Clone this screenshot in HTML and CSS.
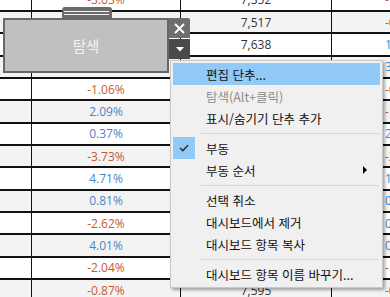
FILE: index.html
```html
<!DOCTYPE html>
<html lang="ko">
<head>
    <meta charset="UTF-8">
    <title>대시보드</title>
    <link rel="stylesheet" href="styles.css">
</head>
<body>
    <div class="sheet">
        <div class="row"><div class="cell"></div><div class="cell pct down">-3.03%</div><div class="cell num">7,352</div><div class="cell side down">-1.84%</div></div>
        <div class="row"><div class="cell"></div><div class="cell pct up">0.86%</div><div class="cell num">7,517</div><div class="cell side down">-0.52%</div></div>
        <div class="row"><div class="cell"></div><div class="cell pct up">1.42%</div><div class="cell num">7,638</div><div class="cell side up">1.07%</div></div>
        <div class="row"><div class="cell"></div><div class="cell pct down">-0.35%</div><div class="cell num">7,611</div><div class="cell side up">3.25%</div></div>
        <div class="row"><div class="cell"></div><div class="cell pct down">-1.06%</div><div class="cell num">7,530</div><div class="cell side down">-0.71%</div></div>
        <div class="row"><div class="cell"></div><div class="cell pct up">2.09%</div><div class="cell num">7,687</div><div class="cell side down">-1.39%</div></div>
        <div class="row"><div class="cell"></div><div class="cell pct up">0.37%</div><div class="cell num">7,716</div><div class="cell side up">2.18%</div></div>
        <div class="row"><div class="cell"></div><div class="cell pct down">-3.73%</div><div class="cell num">7,428</div><div class="cell side down">-2.40%</div></div>
        <div class="row"><div class="cell"></div><div class="cell pct up">4.71%</div><div class="cell num">7,778</div><div class="cell side up">1.93%</div></div>
        <div class="row"><div class="cell"></div><div class="cell pct up">0.81%</div><div class="cell num">7,841</div><div class="cell side up">0.64%</div></div>
        <div class="row"><div class="cell"></div><div class="cell pct down">-2.62%</div><div class="cell num">7,636</div><div class="cell side up">0.28%</div></div>
        <div class="row"><div class="cell"></div><div class="cell pct up">4.01%</div><div class="cell num">7,942</div><div class="cell side up">0.95%</div></div>
        <div class="row"><div class="cell"></div><div class="cell pct down">-2.04%</div><div class="cell num">7,780</div><div class="cell side down">-1.12%</div></div>
        <div class="row"><div class="cell"></div><div class="cell pct down">-0.87%</div><div class="cell num">7,595</div><div class="cell side down">-0.46%</div></div>
    </div>

    <!-- floating button widget -->
    <div class="widget">
        <div class="handle"><span></span><span></span></div>
        <div class="widget-body">탐색</div>
        <div class="widget-close">
            <svg width="11" height="11" viewBox="0 0 11 11"><path d="M1 1 L10 10 M10 1 L1 10" stroke="#fff" stroke-width="1.8" fill="none"/></svg>
        </div>
        <div class="widget-more">
            <svg width="8" height="5" viewBox="0 0 8 5"><path d="M0 0 H8 L4 4.5 Z" fill="#fff"/></svg>
        </div>
    </div>

    <!-- context menu -->
    <div class="menu">
        <div class="menu-item active">편집 단추...</div>
        <div class="menu-item disabled">탐색(Alt+클릭)</div>
        <div class="menu-item">표시/숨기기 단추 추가</div>
        <div class="menu-sep"></div>
        <div class="menu-item">
            <span class="check">
                <svg width="10" height="8" viewBox="0 0 10 8"><path d="M1 4 L3.8 6.6 L9 1.2" stroke="#333" stroke-width="1.5" fill="none"/></svg>
            </span>부동
        </div>
        <div class="menu-item">부동 순서<span class="arrow"></span></div>
        <div class="menu-sep"></div>
        <div class="menu-item">선택 취소</div>
        <div class="menu-item">대시보드에서 제거</div>
        <div class="menu-item">대시보드 항목 복사</div>
        <div class="menu-sep"></div>
        <div class="menu-item">대시보드 항목 이름 바꾸기...</div>
    </div>
</body>
</html>
```

FILE: styles.css
```css
* {
    margin: 0;
    padding: 0;
    box-sizing: border-box;
}

body {
    width: 390px;
    height: 297px;
    overflow: hidden;
    background-color: white;
    font-family: "Open Sans", "Noto Sans", sans-serif;
}

/* Table behind the widgets */
.sheet {
    margin-top: -10.33px;
}

.row {
    display: grid;
    grid-template-columns: 32px 149px 151px 1fr;
    height: 22.33px;
    border-bottom: 2px solid #111;
    background-color: white;
}

.row:nth-child(even) {
    background-color: #f3f3f3;
}

.cell {
    border-right: 1px solid #111;
    display: flex;
    align-items: center;
    font-size: 12px;
    white-space: nowrap;
    overflow: hidden;
}

.pct, .num {
    justify-content: center;
}

.num {
    color: #333;
}

.side {
    border-right: none;
    padding-left: 53px;
}

.up {
    color: #4a85c5;
}

.down {
    color: #c65a2c;
}

/* Floating button */
.widget {
    position: absolute;
    left: 3px;
    top: 7px;
    width: 188px;
    height: 66px;
}

.handle {
    position: absolute;
    left: 59px;
    top: 0;
    width: 50px;
    height: 12px;
    background-color: #6b6b6b;
    border-radius: 3px 3px 0 0;
    padding: 4px 3px 0 2px;
    display: flex;
    flex-direction: column;
    gap: 2px;
}

.handle span {
    display: block;
    height: 1px;
    background-color: #f4f4f4;
}

.widget-body {
    position: absolute;
    left: 0;
    top: 11px;
    width: 166px;
    height: 55px;
    border: 2px solid #686868;
    background-color: #c0c0c0;
    color: #f3f3f3;
    font-family: "Noto Sans CJK KR", sans-serif;
    font-size: 14.5px;
    display: flex;
    align-items: center;
    justify-content: center;
}

.widget-close, .widget-more {
    position: absolute;
    left: 166px;
    width: 21px;
    height: 20px;
    display: flex;
    align-items: center;
    justify-content: center;
}

.widget-close {
    top: 11px;
    background-color: #6e6e6e;
    border-radius: 0 2px 0 0;
}

.widget-more {
    top: 32px;
    background-color: #4a4a4a;
}

/* Context menu */
.menu {
    position: absolute;
    left: 170px;
    top: 60px;
    width: 213px;
    padding: 2px;
    background-color: #f0f0f0;
    border: 1px solid #c8c8c8;
    box-shadow: 2px 2px 3px rgba(0, 0, 0, 0.35);
    font-family: "Noto Sans CJK KR", sans-serif;
    font-size: 12.5px;
    color: #111;
}

.menu-item {
    position: relative;
    height: 22px;
    padding-left: 33px;
    display: flex;
    align-items: center;
}

.menu-item.active {
    background-color: #91c9f7;
}

.menu-item.disabled {
    color: #8d8d8d;
}

.menu-sep {
    height: 8px;
    margin-left: 28px;
    margin-right: 1px;
    display: flex;
    align-items: center;
}

.menu-sep::after {
    content: "";
    flex: 1;
    height: 1px;
    background-color: #d6d6d6;
}

.check {
    position: absolute;
    left: 0;
    top: 0;
    width: 22px;
    height: 22px;
    background-color: #91c9f7;
    display: flex;
    align-items: center;
    justify-content: center;
}

.arrow {
    position: absolute;
    right: 13px;
    top: 7px;
    width: 0;
    height: 0;
    border-top: 4px solid transparent;
    border-bottom: 4px solid transparent;
    border-left: 4px solid #000;
}
```
